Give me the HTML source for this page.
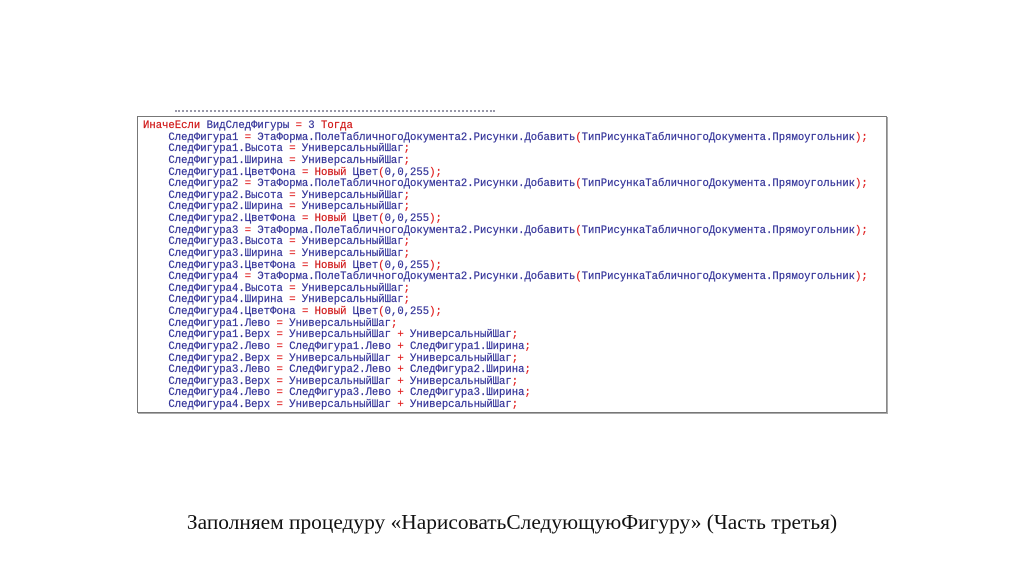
<!DOCTYPE html>
<html><head><meta charset="utf-8"><style>
body{margin:0;width:1024px;height:574px;background:#fff;position:relative;overflow:hidden}
.box{position:absolute;left:137px;top:116px;width:748px;height:295px;border:1px solid #777;border-right-color:#888;box-shadow:1px 1px 0 #aaa}
pre{position:absolute;left:5px;top:4px;margin:0;font-family:"Liberation Mono","DejaVu Sans Mono",monospace;font-size:10.6px;line-height:11.62px;color:#333399;-webkit-text-stroke:0.2px #333399}
.r{color:#e02020;-webkit-text-stroke:0.2px #e02020}.k{color:#d01818;-webkit-text-stroke:0.2px #d01818}
.cap{position:absolute;top:510px;left:0;width:1024px;text-align:center;font-family:"Liberation Serif",serif;font-size:21.4px;color:#111}
.cut{position:absolute;left:175px;top:110px;width:320px;height:2px;border-top:2px dotted #99a}
</style></head><body>
<div class="cut"></div>
<div class="box"><pre><span class="k">ИначеЕсли</span> ВидСледФигуры <span class="r">=</span> 3 <span class="k">Тогда</span>
    СледФигура1 <span class="r">=</span> ЭтаФорма.ПолеТабличногоДокумента2.Рисунки.Добавить<span class="r">(</span>ТипРисункаТабличногоДокумента.Прямоугольник<span class="r">);</span>
    СледФигура1.Высота <span class="r">=</span> УниверсальныйШаг<span class="r">;</span>
    СледФигура1.Ширина <span class="r">=</span> УниверсальныйШаг<span class="r">;</span>
    СледФигура1.ЦветФона <span class="r">=</span> <span class="k">Новый</span> Цвет<span class="r">(</span>0,0,255<span class="r">);</span>
    СледФигура2 <span class="r">=</span> ЭтаФорма.ПолеТабличногоДокумента2.Рисунки.Добавить<span class="r">(</span>ТипРисункаТабличногоДокумента.Прямоугольник<span class="r">);</span>
    СледФигура2.Высота <span class="r">=</span> УниверсальныйШаг<span class="r">;</span>
    СледФигура2.Ширина <span class="r">=</span> УниверсальныйШаг<span class="r">;</span>
    СледФигура2.ЦветФона <span class="r">=</span> <span class="k">Новый</span> Цвет<span class="r">(</span>0,0,255<span class="r">);</span>
    СледФигура3 <span class="r">=</span> ЭтаФорма.ПолеТабличногоДокумента2.Рисунки.Добавить<span class="r">(</span>ТипРисункаТабличногоДокумента.Прямоугольник<span class="r">);</span>
    СледФигура3.Высота <span class="r">=</span> УниверсальныйШаг<span class="r">;</span>
    СледФигура3.Ширина <span class="r">=</span> УниверсальныйШаг<span class="r">;</span>
    СледФигура3.ЦветФона <span class="r">=</span> <span class="k">Новый</span> Цвет<span class="r">(</span>0,0,255<span class="r">);</span>
    СледФигура4 <span class="r">=</span> ЭтаФорма.ПолеТабличногоДокумента2.Рисунки.Добавить<span class="r">(</span>ТипРисункаТабличногоДокумента.Прямоугольник<span class="r">);</span>
    СледФигура4.Высота <span class="r">=</span> УниверсальныйШаг<span class="r">;</span>
    СледФигура4.Ширина <span class="r">=</span> УниверсальныйШаг<span class="r">;</span>
    СледФигура4.ЦветФона <span class="r">=</span> <span class="k">Новый</span> Цвет<span class="r">(</span>0,0,255<span class="r">);</span>
    СледФигура1.Лево <span class="r">=</span> УниверсальныйШаг<span class="r">;</span>
    СледФигура1.Верх <span class="r">=</span> УниверсальныйШаг <span class="r">+</span> УниверсальныйШаг<span class="r">;</span>
    СледФигура2.Лево <span class="r">=</span> СледФигура1.Лево <span class="r">+</span> СледФигура1.Ширина<span class="r">;</span>
    СледФигура2.Верх <span class="r">=</span> УниверсальныйШаг <span class="r">+</span> УниверсальныйШаг<span class="r">;</span>
    СледФигура3.Лево <span class="r">=</span> СледФигура2.Лево <span class="r">+</span> СледФигура2.Ширина<span class="r">;</span>
    СледФигура3.Верх <span class="r">=</span> УниверсальныйШаг <span class="r">+</span> УниверсальныйШаг<span class="r">;</span>
    СледФигура4.Лево <span class="r">=</span> СледФигура3.Лево <span class="r">+</span> СледФигура3.Ширина<span class="r">;</span>
    СледФигура4.Верх <span class="r">=</span> УниверсальныйШаг <span class="r">+</span> УниверсальныйШаг<span class="r">;</span></pre></div>
<div class="cap">Заполняем процедуру «НарисоватьСледующуюФигуру» (Часть третья)</div>
</body></html>
